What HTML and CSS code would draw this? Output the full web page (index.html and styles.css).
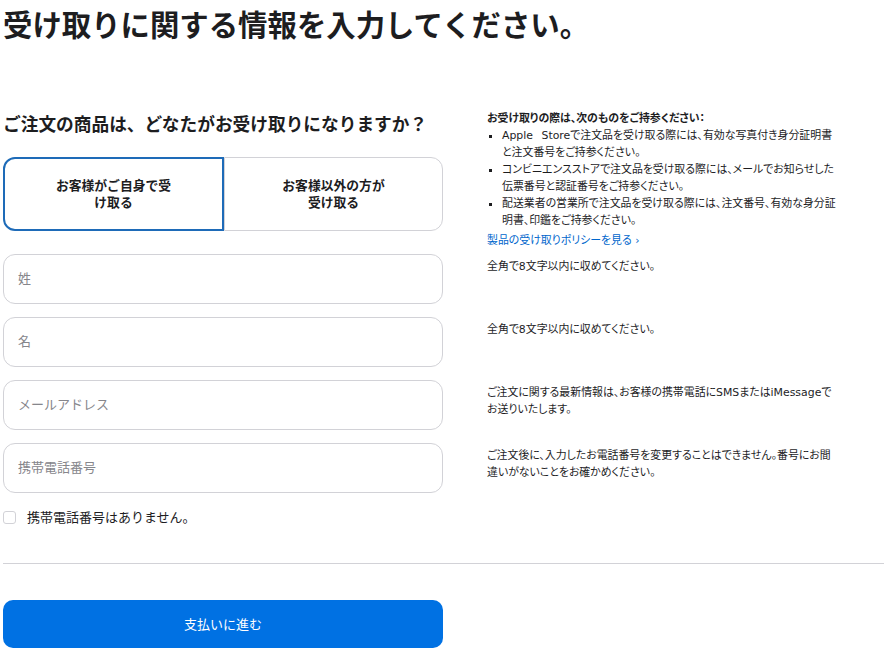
FILE: index.html
```html
<!DOCTYPE html>
<html lang="ja">

<head>
    <title>受け取り情報</title>
    <meta http-equiv="Content-Type" content="text/html;charset=UTF-8">
    <meta name="viewport" content="width=device-width, initial-scale=1.0">
    <link rel="stylesheet" href="styles.css">
</head>

<body>
    <h1>受け取りに関する情報を入力してください。</h1>

    <form class="pickup">
        <div class="pickup__who">
            <h2>ご注文の商品は、どなたがお受け取りになりますか？</h2>
            <div class="segment">
                <button type="button" class="segment__item segment__item--selected">お客様がご自身で受け取る</button>
                <button type="button" class="segment__item">お客様以外の方が<br>受け取る</button>
            </div>
        </div>
        <div class="info">
            <p class="info__title">お受け取りの際は、次のものをご持参ください：</p>
            <ul>
                <li>Apple Storeで注文品を受け取る際には、有効な写真付き身分証明書と注文番号をご持参ください。</li>
                <li>コンビニエンスストアで注文品を受け取る際には、メールでお知らせした伝票番号と認証番号をご持参ください。</li>
                <li>配送業者の営業所で注文品を受け取る際には、注文番号、有効な身分証明書、印鑑をご持参ください。</li>
            </ul>
            <a href="#">製品の受け取りポリシーを見る ›</a>
        </div>

        <div class="field"><input type="text" placeholder="姓"></div>
        <p class="note">全角で8文字以内に収めてください。</p>

        <div class="field"><input type="text" placeholder="名"></div>
        <p class="note">全角で8文字以内に収めてください。</p>

        <div class="field"><input type="email" placeholder="メールアドレス"></div>
        <p class="note">ご注文に関する最新情報は、お客様の携帯電話にSMSまたはiMessageでお送りいたします。</p>

        <div class="field"><input type="tel" placeholder="携帯電話番号"></div>
        <p class="note">ご注文後に、入力したお電話番号を変更することはできません。番号にお間違いがないことをお確かめください。</p>

        <div class="no-phone">
            <input type="checkbox" id="nophone">
            <label for="nophone">携帯電話番号はありません。</label>
        </div>
    </form>

    <hr>

    <button type="submit" class="continue">支払いに進む</button>
</body>

</html>
```

FILE: styles.css
```css
* {
    box-sizing: border-box;
}

body {
    font-family: "Noto Sans CJK JP", "Noto Sans", sans-serif;
    color: #1d1d1f;
    margin: 0;
    padding: 0 8px 0 3px;
}

h1 {
    font-size: 29.4px;
    line-height: 36px;
    font-weight: bold;
    margin: 0;
    padding-top: 5px;
}

.pickup {
    display: grid;
    grid-template-columns: 440px 352px;
    column-gap: 44px;
    margin-top: 70px;
}

h2 {
    font-size: 17.7px;
    line-height: 24px;
    font-weight: bold;
    margin: 0 0 22px;
    white-space: nowrap;
}

.pickup__who {
    padding-bottom: 23px;
}

.segment {
    display: flex;
    height: 74px;
}

.segment__item {
    flex: 1;
    font-family: inherit;
    font-size: 12.8px;
    line-height: 17px;
    font-weight: bold;
    color: #1d1d1f;
    background: #fff;
    border: 1px solid #d2d2d7;
    padding: 0 46px 2px;
    cursor: pointer;
}

.segment__item:first-child {
    border-radius: 12px 0 0 12px;
    border-right: none;
}

.segment__item:last-child {
    border-radius: 0 12px 12px 0;
}

.segment__item--selected {
    border: 2px solid #1e6bb8;
    border-right: 2px solid #1e6bb8 !important;
}

.info,
.note {
    font-family: "DejaVu Sans", "Noto Sans CJK JP", sans-serif;
    font-size: 10.9px;
    line-height: 17px;
    font-feature-settings: "palt";
}

.info {
    margin-top: -1px;
}

.info__title {
    font-weight: bold;
    margin: 0;
}

.info ul {
    margin: 0;
    padding-left: 15px;
    list-style: square;
    word-spacing: 5px;
}

.info a {
    display: inline-block;
    margin-top: 3px;
    color: #0066cc;
    text-decoration: none;
}

.field {
    padding-bottom: 13px;
}

.field input {
    width: 100%;
    height: 50px;
    padding: 0 14px 3px;
    border: 1px solid #d2d2d7;
    border-radius: 12px;
    font-family: inherit;
    font-size: 13px;
    color: #1d1d1f;
}

.field input::placeholder {
    color: #86868b;
}

.note {
    margin: 0;
    padding-top: 4px;
}

.no-phone {
    display: flex;
    align-items: center;
    height: 20px;
    font-size: 13px;
}

.no-phone input {
    appearance: none;
    width: 13px;
    height: 13px;
    margin: 2px 11px 0 0;
    border: 1px solid #d2d2d7;
    border-radius: 3px;
    background: #fff;
}

hr {
    border: none;
    border-top: 1px solid #d2d2d7;
    margin: 37px 0 36px;
}

.continue {
    display: block;
    width: 440px;
    height: 48px;
    padding-bottom: 3px;
    border: none;
    border-radius: 10px;
    background-color: #0071e3;
    color: #fff;
    font-family: inherit;
    font-size: 13px;
    cursor: pointer;
}
```
